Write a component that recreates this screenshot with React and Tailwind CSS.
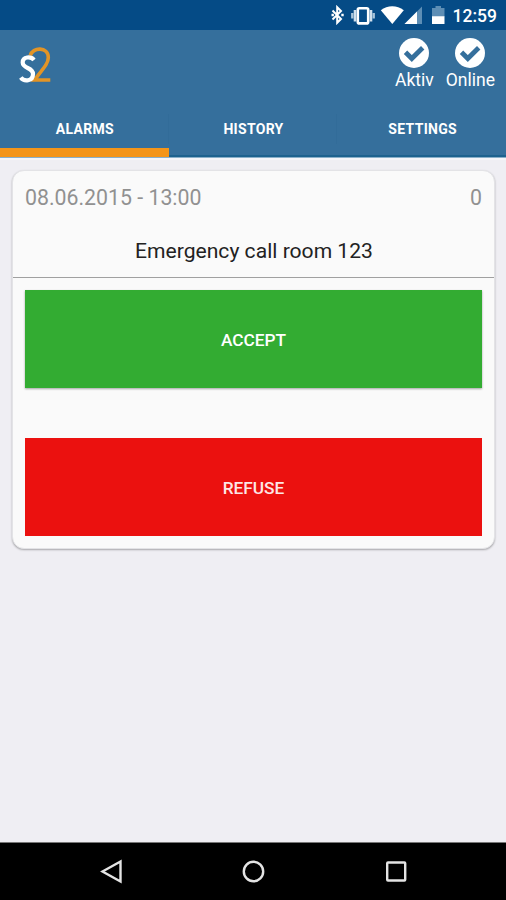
import React, { useState } from 'react';

const TABS = ['ALARMS', 'HISTORY', 'SETTINGS'];

function StatusBar() {
  return (
    <div className="h-[30px] bg-[#054b86] flex items-center justify-end pr-[9px] text-white">
      <svg width="115" height="20" viewBox="330 5 115 20" className="mr-2 shrink-0" fill="none">
        {/* Bluetooth */}
        <path d="M332.500 10.500l8.500 8.500-3.800 3.800V7.200l3.800 3.800-8.500 8.500" stroke="#fff" strokeWidth="2" />
        <path d="M331.500 13.800h2.400v2.400h-2.400zM341.300 13.800h2.400v2.400h-2.400z" fill="#fff" />
        {/* Vibrate */}
        <rect x="357.800" y="8.200" width="10.400" height="15.200" rx="1.500" stroke="#fff" strokeWidth="2.600" />
        <path d="M355 10v11.500M371 10v11.500" stroke="#cfe0ed" strokeWidth="2.600" />
        <path d="M352.300 13v5.500M373.700 13v5.500" stroke="#a9c5da" strokeWidth="2.400" />
        {/* Wifi */}
        <path d="M380.800 10.200C387.500 5 397 5 403.800 10.200L392.300 24z" fill="#fff" />
        {/* Signal */}
        <path d="M404.500 24L422 6.500V24z" fill="#5d8eb5" />
        <path d="M404.500 24L417 11.500V24z" fill="#fff" />
        {/* Battery */}
        <path d="M432 8h3.500V6h5.500v2h3.500v8.500H432z" fill="#5d8eb5" />
        <path d="M432 16.200h12.500V24H432z" fill="#fff" />
      </svg>
      <span className="text-[17.5px] leading-[30px] font-medium pt-0.5">12:59</span>
    </div>
  );
}

function Logo() {
  return (
    <svg width="34" height="40" viewBox="18 46 34 40" className="mt-4 ml-[18px]" fill="none">
      <path
        d="M30.300 55.500C32.500 46.800 48.300 46.500 48.300 57.500C48.300 63 45 66.500 34.500 80H50.300"
        stroke="#e29426"
        strokeWidth="3.600"
      />
      <path
        d="M34 60C31 56.300 22.700 56.300 22.700 62.500C22.700 69 33 67 33 74C33 81.500 24 82 20.800 77.500"
        stroke="#fff"
        strokeWidth="4.200"
      />
    </svg>
  );
}

function StatusBadge({ label }) {
  return (
    <div className="flex flex-col items-center">
      <svg width="30" height="30" viewBox="0 0 30 30">
        <circle cx="15" cy="15" r="15" fill="#fff" />
        <path d="M6.500 14.200L12.800 20.500L23.700 9.700" fill="none" stroke="#356f9c" strokeWidth="4.800" />
      </svg>
      <span className="text-[17.5px] leading-6 text-white">{label}</span>
    </div>
  );
}

export default function App() {
  const [activeTab, setActiveTab] = useState('ALARMS');

  return (
    <div className="w-full h-screen flex flex-col bg-[#efeef3] font-['Roboto',sans-serif] overflow-hidden">
      <StatusBar />

      {/* App bar with tabs */}
      <header className="h-[128px] shrink-0 bg-[#356f9c] border-b border-[#8ab0ca] flex flex-col">
        <div className="h-[70px] flex justify-between">
          <Logo />
          <div className="flex gap-3 pt-[8px] pr-[11px]">
            <StatusBadge label="Aktiv" />
            <StatusBadge label="Online" />
          </div>
        </div>
        <nav className="flex-1 grid grid-cols-3">
          {TABS.map((tab) => (
            <button
              key={tab}
              onClick={() => setActiveTab(tab)}
              className={`group text-white text-[14px] tracking-[0.3px] font-bold pt-[9px] border-b-[9px] ${
                tab === activeTab ? 'border-[#f49519]' : 'border-transparent'
              }`}
            >
              <span className="block pl-0.5 leading-[30px] border-r border-[#326c99] group-last:border-r-0">{tab}</span>
            </button>
          ))}
        </nav>
        <div className="h-0.5 -mt-0.5 ml-[169px] bg-[#1d628f]" />
      </header>

      <main className="flex-1 pl-3 pr-[11px] pt-3 border-t-2 border-[#f5f5f9] -mb-0.5">
        {/* Alarm card */}
        <div className="h-[379px] -mt-0.5 bg-[#fafafa] rounded-xl border border-[#e3e3e6] shadow-[0_1px_2px_rgba(0,0,0,0.3)]">
          <div className="h-[107px] border-b-[1.5px] border-[#a0a0a0] px-3">
            <div className="flex justify-between pt-3 text-[21.3px] leading-[30px] text-[#919191]">
              <span>08.06.2015 - 13:00</span>
              <span>0</span>
            </div>
            <p className="mt-[23px] pl-px text-center text-[21.1px] leading-[30px] text-[#222]">
              Emergency call room 123
            </p>
          </div>
          <div className="px-3 pt-3 flex flex-col gap-[50px] text-[17.3px] font-medium text-white">
            <button className="h-[98px] pt-[3px] bg-[#33ac32] shadow-[0_1px_2px_rgba(0,0,0,0.35)]">ACCEPT</button>
            <button className="h-[98px] pt-[3px] bg-[#eb110f] text-[#fde6e6]">REFUSE</button>
          </div>
        </div>
      </main>

      {/* Navigation bar */}
      <footer className="h-[58px] shrink-0 bg-black border-t border-[#777] flex items-center justify-center">
        <svg width="308" height="26" viewBox="99 858.500 308 26" fill="none" stroke="#e4e4e4" strokeWidth="2.400">
          <path d="M102.500 871L120.500 861V881z" />
          <circle cx="253.500" cy="871" r="9.700" />
          <rect x="387.200" y="862" width="18" height="18" rx="0.800" />
        </svg>
      </footer>
    </div>
  );
}
